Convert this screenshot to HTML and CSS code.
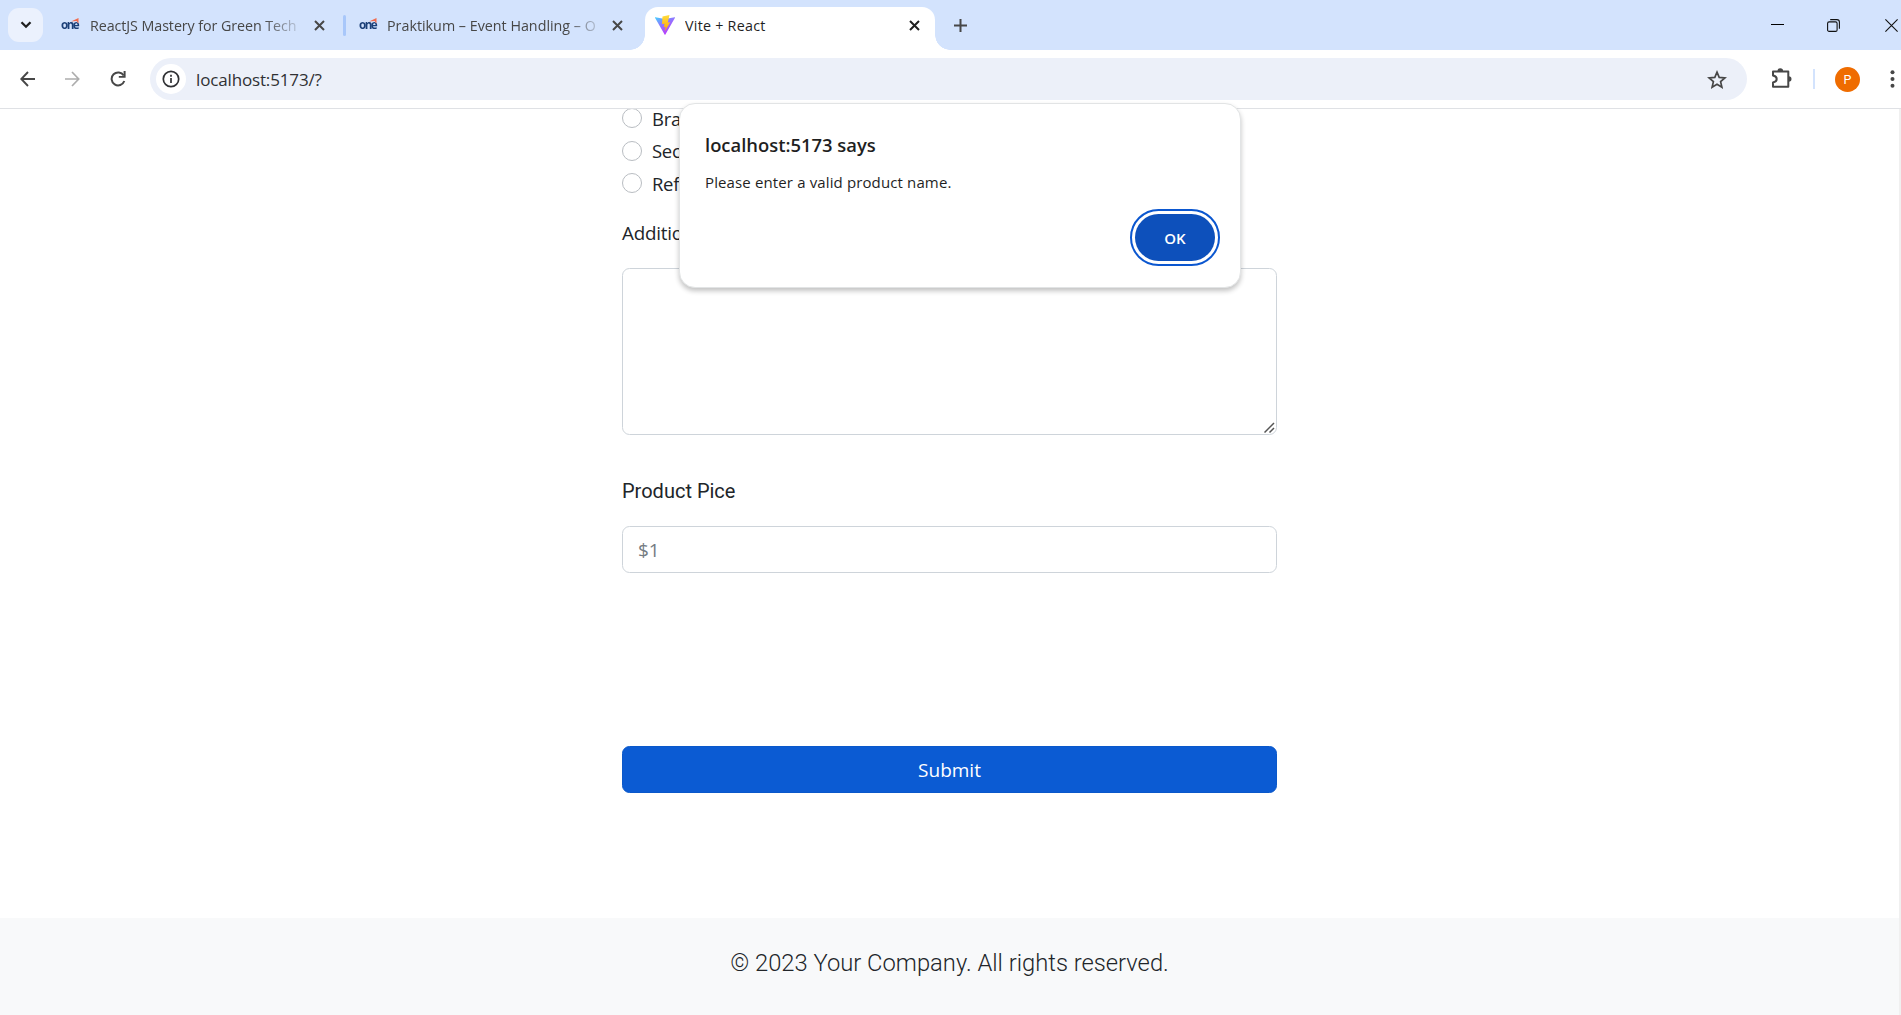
FILE: index.html
```html
<!DOCTYPE html>
<html lang="en">
<head>
<meta charset="utf-8">
<title>Vite + React</title>
<link rel="stylesheet" href="styles.css">
</head>
<body>
<div class="browser">
  <header class="tabstrip">
    <button class="tab-search" aria-label="Search tabs"><svg width="12" height="8" viewBox="0 0 12 8"><path d="M1.5 1.2 6 5.7l4.500-4.500" fill="none" stroke="#1f1f1f" stroke-width="2.300"/></svg></button>
    <div class="tab tab-first">
      <span class="one-logo"><span>one</span><svg width="8" height="6" viewBox="0 0 8 6"><path d="M0 3.500 7.500 0v5.500L5.500 3Z" fill="#f26b4e"/></svg></span>
      <span class="tab-title title-one">ReactJS Mastery for Green Tech</span>
      <svg class="close" width="11" height="11" viewBox="0 0 11 11"><path d="m1 1 9 9M10 1l-9 9"/></svg>
    </div>
    <span class="tab-divider"></span>
    <div class="tab tab-second">
      <span class="one-logo"><span>one</span><svg width="8" height="6" viewBox="0 0 8 6"><path d="M0 3.500 7.500 0v5.500L5.500 3Z" fill="#f26b4e"/></svg></span>
      <span class="tab-title title-two">Praktikum – Event Handling – O</span>
      <svg class="close" width="11" height="11" viewBox="0 0 11 11"><path d="m1 1 9 9M10 1l-9 9"/></svg>
    </div>
    <div class="tab tab-active">
      <svg class="vite" width="20" height="20" viewBox="0 0 20 20">
        <defs>
          <linearGradient id="shield" x1="0" y1="0" x2=".6" y2="1"><stop offset="0" stop-color="#41d1ff"/><stop offset=".45" stop-color="#8f78ff"/><stop offset="1" stop-color="#bd34fe"/></linearGradient>
          <linearGradient id="bolt" x1="0" y1="0" x2="0" y2="1"><stop offset="0" stop-color="#ffdc3c"/><stop offset="1" stop-color="#ffa800"/></linearGradient>
        </defs>
        <path d="M.3 2.300 10 4l9.700-1.700c.3 0 .4.300.3.500L10.400 19.600c-.2.400-.6.400-.8 0L0 2.800c-.1-.2 0-.5.300-.5Z" fill="url(#shield)"/>
        <path d="m14.500.1-7 1.400-.5 7.600 2.500-.4-.7 3.500 1.900-.5-.9 4.700 5.400-9.200-2.400.3Z" fill="url(#bolt)"/>
      </svg>
      <span class="tab-title title-vite">Vite + React</span>
      <svg class="close" width="11" height="11" viewBox="0 0 11 11"><path d="m1 1 9 9M10 1l-9 9"/></svg>
    </div>
    <svg class="new-tab" width="13" height="13" viewBox="0 0 13 13"><path d="M6.500 0v13M0 6.500h13" stroke="#474747" stroke-width="2"/></svg>
    <div class="window-controls">
      <svg width="13" height="13" viewBox="0 0 13 13"><path d="M0 5.500h13" stroke="#000" stroke-width="1"/></svg>
      <svg width="13" height="13" viewBox="0 0 13 13" fill="none" stroke="#111" stroke-width="1.100"><rect x=".6" y="2.900" width="9.500" height="9.500" rx="1.500"/><path d="M3.200.6h6.700q2.500 0 2.500 2.500v6.700"/></svg>
      <svg width="13" height="13" viewBox="0 0 13 13"><path d="m.4.4 12.200 12.200M12.600.4.400 12.600" stroke="#111" stroke-width="1.100"/></svg>
    </div>
  </header>

  <nav class="toolbar">
    <svg class="nav-back" width="15" height="16" viewBox="0 0 15 16" fill="none" stroke="#474747" stroke-width="1.900"><path d="M15 8H1.500M8 1 1.300 8 8 15"/></svg>
    <svg class="nav-forward" width="15" height="16" viewBox="0 0 15 16" fill="none" stroke="#adadad" stroke-width="1.700"><path d="M0 8h13.500M7 1l6.700 7L7 15"/></svg>
    <svg class="nav-reload" width="16" height="16" viewBox="0 0 16 16"><path d="M13.700 4.500A6.500 6.500 0 1 0 14.300 10" fill="none" stroke="#474747" stroke-width="2"/><path d="M15.600 0v6.800H8.800V4.900h4.800V0Z" fill="#474747"/></svg>
    <div class="omnibox">
      <span class="site-info"><svg width="18" height="18" viewBox="0 0 18 18"><circle cx="9" cy="9" r="7.700" fill="none" stroke="#303134" stroke-width="1.700"/><path d="M9 8v5M9 4.700v2" stroke="#303134" stroke-width="1.700"/></svg></span>
      <span class="url">localhost:5173/?</span>
      <svg class="star" width="20" height="19" viewBox="0 0 20 19"><path d="m10 2.200 2.200 5.200 5.700.5-4.300 3.700 1.300 5.600-4.900-3-4.900 3 1.300-5.600L2.100 7.900l5.700-.5Z" fill="none" stroke="#474747" stroke-width="1.700"/></svg>
    </div>
    <svg class="puzzle" width="21" height="21" viewBox="0 0 21 21"><path d="M2 3.400h15.300v15.300H2v-4.200q3.700-.6 3.700-3.400T2 7.600Z" fill="none" stroke="#474747" stroke-width="2" stroke-linejoin="round"/><path d="M6.500 3a2.800 2.800 0 0 1 5.600 0ZM17.700 8.200a2.800 2.800 0 0 1 0 5.600Z" fill="#474747"/></svg>
    <span class="toolbar-divider"></span>
    <span class="avatar">P</span>
    <svg class="menu" width="5" height="18" viewBox="0 0 5 18" fill="#474747"><circle cx="2.500" cy="2.200" r="2"/><circle cx="2.500" cy="9" r="2"/><circle cx="2.500" cy="15.800" r="2"/></svg>
  </nav>

  <main class="page">
    <form class="product-form">
      <label class="radio-row"><input type="radio" name="freshness"><span>Brand New</span></label>
      <label class="radio-row"><input type="radio" name="freshness"><span>Second Hand</span></label>
      <label class="radio-row"><input type="radio" name="freshness"><span>Refurbished</span></label>
      <label class="field-label label-extra" for="description">Additional Description</label>
      <div class="textarea-wrap">
        <textarea id="description"></textarea>
        <svg class="grip" width="11" height="11" viewBox="0 0 11 11"><path d="M.5 10.500 10 1M5.500 10.500 10 6" stroke="#555" stroke-width="1.500"/></svg>
      </div>
      <label class="field-label label-price" for="price">Product Pice</label>
      <input class="price" id="price" type="text" placeholder="$1">
      <button class="submit" type="button">Submit</button>
    </form>
    <footer class="footer"><span>© 2023 Your Company. All rights reserved.</span></footer>
  </main>

  <section class="dialog" role="alertdialog">
    <h1>localhost:5173 says</h1>
    <p>Please enter a valid product name.</p>
    <button class="ok" type="button">OK</button>
  </section>
</div>
</body>
</html>
```
FILE: styles.css
```css
* { box-sizing: border-box; }
body { margin: 0; background: #fff; font-family: "Open Sans", "Noto Sans", sans-serif; overflow: hidden; }
button, input, textarea { font: inherit; }
svg { display: block; flex: none; }

.browser { position: relative; display: flex; flex-direction: column; width: 1901px; height: 1015px; overflow: hidden; }

/* Tab strip */
.tabstrip { display: flex; align-items: center; flex: none; height: 50px; background: #d3e3fd; }
.tab-search { display: flex; align-items: center; justify-content: center; width: 35px; height: 34px; margin-left: 8px; padding: 0; border: 0; border-radius: 11px; background: #ebf1fd; }
.tab { display: flex; align-items: center; flex: none; height: 50px; }
.tab-first { width: 282px; padding-left: 18px; }
.tab-first .close { margin-left: 17px; }
.tab-second { width: 299px; padding-left: 13px; }
.tab-second .close { margin-left: 16px; }
.tab-divider { flex: none; width: 3px; height: 21px; margin-left: 18px; border-radius: 2px; background: #a8c7fa; }
.tab-title { flex: none; overflow: hidden; padding-top: 1px; white-space: nowrap; color: #474747; font-size: 14.300px; line-height: 22px; }
.title-one { width: 207px; margin-left: 11px; letter-spacing: -.08px; -webkit-mask-image: linear-gradient(90deg, #000 84%, transparent 104%); }
.title-two { width: 209px; margin-left: 10px; letter-spacing: 0; -webkit-mask-image: linear-gradient(90deg, #000 86%, transparent 104%); }
.title-vite { width: 210px; margin-left: 10px; color: #1f1f1f; letter-spacing: .25px; }
.close { fill: none; stroke: #474747; stroke-width: 2; }
.one-logo { position: relative; width: 18px; flex: none; color: #1c4078; font: 700 13px/14px "Open Sans", sans-serif; letter-spacing: -1.700px; }
.one-logo span { display: block; margin-top: -3px; transform: scaleX(.9); transform-origin: left; }
.one-logo svg { position: absolute; right: 0; top: -2px; }
.tab-active { position: relative; width: 290px; height: 43px; margin: 7px 0 0; padding: 0 15px 7px 10px; border-radius: 13px 13px 0 0; background: #fff; }
.tab-active::before, .tab-active::after { content: ""; position: absolute; bottom: 0; width: 15px; height: 15px; }
.tab-active::before { left: -15px; background: radial-gradient(circle at 0 0, transparent 14.500px, #fff 15px); }
.tab-active::after { right: -15px; background: radial-gradient(circle at 100% 0, transparent 14.500px, #fff 15px); }
.tab-active .close { margin-left: auto; stroke: #1f1f1f; }
.new-tab { margin-left: 19px; }
.window-controls { display: flex; gap: 43px; margin-left: auto; padding-right: 3px; }
.window-controls svg:last-child { margin-left: 2px; }

/* Toolbar */
.toolbar { display: flex; align-items: center; flex: none; height: 59px; border-bottom: 1px solid #dfe1e5; background: #fff; }
.nav-back { margin-left: 20px; }
.nav-forward { margin-left: 30px; }
.nav-reload { margin-left: 30px; }
.omnibox { display: flex; align-items: center; width: 1597px; height: 42px; margin-left: 24px; padding: 0 20px 0 6px; border-radius: 21px; background: #ecf0f9; }
.site-info { display: flex; align-items: center; justify-content: center; width: 30px; height: 30px; border-radius: 50%; background: #fff; }
.url { margin-left: 10px; color: #303134; font-size: 17px; letter-spacing: -.15px; }
.star { margin-left: auto; }
.puzzle { margin: 0 0 2px 24px; }
.toolbar-divider { width: 2px; height: 20px; margin-left: 21px; background: #d3e3fd; }
.avatar { width: 25px; height: 25px; margin-left: 20px; border-radius: 50%; background: #ef6c00; color: #fff; font: 12.500px/25px Roboto, sans-serif; text-align: center; }
.menu { margin-left: 30px; }

/* Page content */
.page { display: flex; flex-direction: column; flex: 1; overflow: hidden; border-right: 2px solid #f0f0f0; color: #212529; }
.product-form { display: flex; flex-direction: column; flex: none; width: 655px; height: 816px; margin: -7px 0 0 622px; }
.radio-row { display: flex; align-items: center; height: 32.500px; font-size: 18.500px; line-height: 30px; letter-spacing: -.3px; white-space: nowrap; }
.radio-row input { appearance: none; width: 20px; height: 20px; margin: 0 10px 0 0; border: 1px solid #b9bdc2; border-radius: 50%; background: #fff; }
.radio-row span { padding-top: 1px; }
.field-label { line-height: 30px; white-space: nowrap; }
.label-extra { margin-top: 18px; font-size: 18.800px; letter-spacing: -.2px; }
.textarea-wrap { position: relative; height: 167px; margin-top: 20px; }
.textarea-wrap textarea { display: block; width: 100%; height: 100%; resize: none; border: 1px solid #ced4da; border-radius: 7.500px; background: #fff; }
.grip { position: absolute; right: 2px; bottom: 2px; }
.label-price { margin-top: 41px; font: 400 20px/30px Roboto, sans-serif; }
.price { height: 47px; margin-top: 20px; padding: 2px 15px 0; border: 1px solid #ced4da; border-radius: 7.500px; background: #fff; font-size: 19px; }
.price::placeholder { color: #747b82; opacity: 1; }
.submit { height: 47px; margin-top: 173px; padding: 2px 0 0; border: 1px solid #0a58ca; border-radius: 7.500px; background: #0b5bd3; color: #fff; font-size: 19px; }
.footer { flex: 1; padding-top: 27px; background: #f8f9fa; color: #212529; text-align: center; font: 300 23.750px/37px Roboto, sans-serif; }

/* Alert over the page */
.dialog { position: absolute; left: 679px; top: 103px; display: flex; flex-direction: column; width: 562px; height: 185px; padding: 27px 26px 0 25px; border: 1px solid #e2e4e5; border-radius: 16px; background: #fff; box-shadow: 0 3px 5px rgba(0, 0, 0, .24); color: #1f1f1f; }
.dialog h1 { margin: 0; font-size: 18.400px; line-height: 28px; font-weight: 600; }
.dialog p { margin: 12px 0 0; font-size: 15px; line-height: 22px; letter-spacing: .13px; }
.ok { align-self: flex-end; width: 80px; height: 47px; margin: 21px -1px 0 0; padding: 1px 0 0; border: 0; border-radius: 24px; outline: 2px solid #0b57d0; outline-offset: 3px; background: #0d50bb; color: #fff; font-size: 15px; font-weight: 600; }
```
